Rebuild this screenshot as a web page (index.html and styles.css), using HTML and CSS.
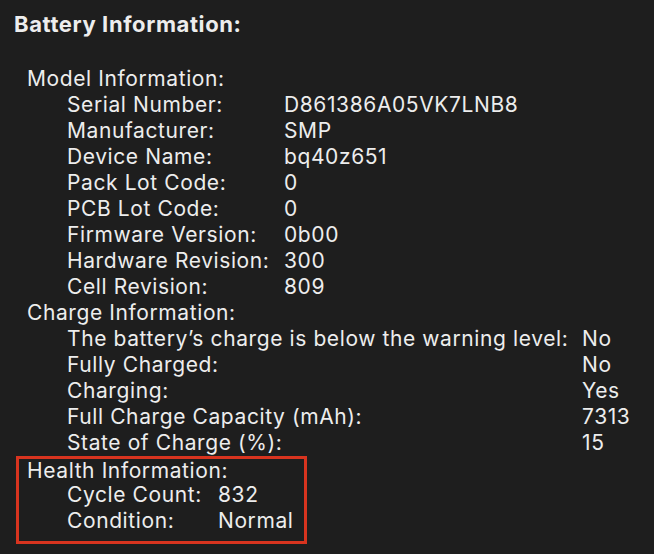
FILE: index.html
```html
<!DOCTYPE html>
<html>
<head>
<meta charset="utf-8">
<link rel="stylesheet" href="styles.css">
</head>
<body>
<div class="page">
  <div class="title">Battery Information:</div>
  <div class="section">
    <div class="head">Model Information:</div>
    <div class="rows model">
      <span>Serial Number:</span><span>D861386A05VK7LNB8</span>
      <span>Manufacturer:</span><span>SMP</span>
      <span>Device Name:</span><span>bq40z651</span>
      <span>Pack Lot Code:</span><span>0</span>
      <span>PCB Lot Code:</span><span>0</span>
      <span>Firmware Version:</span><span>0b00</span>
      <span>Hardware Revision:</span><span>300</span>
      <span>Cell Revision:</span><span>809</span>
    </div>
  </div>
  <div class="section">
    <div class="head">Charge Information:</div>
    <div class="rows charge">
      <span>The battery’s charge is below the warning level:</span><span>No</span>
      <span>Fully Charged:</span><span>No</span>
      <span>Charging:</span><span>Yes</span>
      <span>Full Charge Capacity (mAh):</span><span>7313</span>
      <span>State of Charge (%):</span><span>15</span>
    </div>
  </div>
  <div class="section health">
    <div class="head head-health">Health Information:</div>
    <div class="rows health-rows">
      <span>Cycle Count:</span><span>832</span>
      <span>Condition:</span><span>Normal</span>
    </div>
  </div>
</div>
</body>
</html>
```
FILE: styles.css
```css
html, body {
  margin: 0;
  padding: 0;
  background: #1e1e1e;
}
.page {
  width: 654px;
  height: 554px;
  background: #1e1e1e;
  color: #ededed;
  font-family: Inter, "Liberation Sans", sans-serif;
  font-size: 21px;
  letter-spacing: 0.6px;
  line-height: 26px;
  padding-top: 11px;
  box-sizing: border-box;
  white-space: nowrap;
}
.title {
  font-weight: 700;
  font-size: 22px;
  letter-spacing: 0.6px;
  padding-left: 14px;
  margin-bottom: 29px;
}
.head {
  padding-left: 27px;
}
.rows {
  display: grid;
  padding-left: 67px;
}
.model {
  grid-template-columns: 217px auto;
}
.charge {
  grid-template-columns: 515px auto;
}
.health {
  margin-left: 16px;
  width: 291px;
  box-sizing: border-box;
  border: 3px solid #d8341f;
  padding-bottom: 7px;
}
.head-health {
  padding-left: 8px;
  line-height: 23px;
}
.health-rows {
  padding-left: 48px;
  grid-template-columns: 151px auto;
}
```
